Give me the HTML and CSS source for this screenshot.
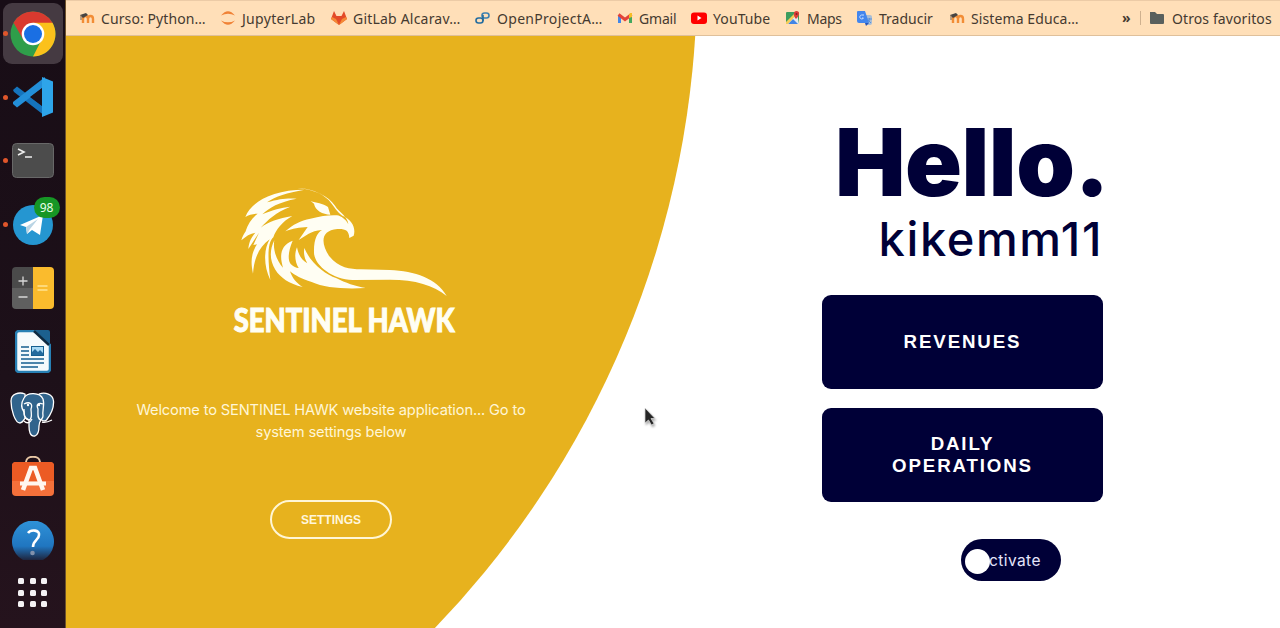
FILE: index.html
```html
<!DOCTYPE html>
<html lang="es">
<head>
<meta charset="utf-8">
<title>Sentinel Hawk</title>
<link rel="stylesheet" href="styles.css">
</head>
<body>
<aside class="dock">
  <div class="app running active"><svg width="46" height="46" viewBox="0 0 46 46"><circle cx="23" cy="23" r="22.500" fill="#2f9e4a"/><path d="M3.500 11.700A22.500 22.500 0 0 1 42.500 11.800L23 23z" fill="#d93a2f"/><path d="M42.500 11.800A22.500 22.500 0 0 1 23 45.500L32 28 23 11.800z" fill="#fbc11c"/><path d="M3.500 11.700L13.500 29 23 23 23 11.800z" fill="#d93a2f"/><circle cx="23" cy="23" r="11.300" fill="#fff"/><circle cx="23" cy="23" r="9" fill="#1a6fe3"/></svg></div>
  <div class="app running"><svg width="42" height="42" viewBox="0 0 42 42"><path d="M1 14l4-3.500L33 32v8L2 16z" fill="#1574bd"/><path d="M1 28l4 3.500L33 10V1L1 26z" fill="#238fd9"/><path d="M30 1l11 4.500v31L30 41z" fill="#2ea5ea"/><path d="M30 12v18L18 21z" fill="#1c1018"/></svg></div>
  <div class="app running"><svg width="42" height="36" viewBox="0 0 42 36"><rect x=".5" y=".5" width="41" height="34" rx="4" fill="#4c4c4c" stroke="#686868"/><path d="M6 6l6 3-6 3M13 14h7" fill="none" stroke="#eee" stroke-width="1.600"/></svg></div>
  <div class="app running"><svg width="40" height="40" viewBox="0 0 40 40"><circle cx="20" cy="20" r="20" fill="#2596d1"/><path d="M7 20L30 10l-3 20-8-5-5 4-1-7z" fill="#fff"/><path d="M13 22l12-8-8 10-3 5z" fill="#b9d4e4"/></svg><span class="count">98</span></div>
  <div class="app"><svg width="42" height="42" viewBox="0 0 42 42"><path d="M4 0h17v21H0V4a4 4 0 0 1 4-4z" fill="#4a4a4a"/><path d="M0 21h21v21H4a4 4 0 0 1-4-4z" fill="#5f5f5f"/><path d="M21 0h17a4 4 0 0 1 4 4v34a4 4 0 0 1-4 4H21z" fill="#fabb2d"/><path d="M6.500 14h9M11 9.500v9M6.500 30h9" stroke="#d8d8d8" stroke-width="1.300"/><path d="M25.500 19h10M25.500 23h10" stroke="#ffe391" stroke-width="1.300"/></svg></div>
  <div class="app"><svg width="36" height="43" viewBox="0 0 36 43"><path d="M4 1h16l15 14v24a3 3 0 0 1-3 3H4a3 3 0 0 1-3-3V4a3 3 0 0 1 3-3z" fill="#f4fafc" stroke="#2780b4" stroke-width="2.500"/><path d="M20 0h13a2 2 0 0 1 2 2v12z" fill="#1c608e"/><path d="M19 1l15 14" stroke="#0d2940" stroke-width="2.500"/><path d="M6 17h8M6 21h8M6 25h8M6 29h23M6 33h23M6 37h17" stroke="#155f8f" stroke-width="1.600"/><rect x="16.500" y="16.500" width="12" height="9" fill="#a7d9f4" stroke="#155f8f"/><path d="M17 25v-3l3-3 3 3 2-2 3 3v2z" fill="#236b9e"/></svg></div>
  <div class="app"><svg width="45" height="46" viewBox="0 0 45 46"><g fill="#31648c" stroke="#fff" stroke-width="1.300" stroke-linejoin="round"><path d="M15 2C9-.5 1 2 1 9c0 9 4 22 9 22 3 0 4-4 6-6z"/><path d="M29 2c6-2 14 0 14.500 7 .5 7-3 14-7 19-2 2-7 0-7-4z"/><path d="M14 6C17 0 30 0 33 7c2 6-1 11 0 17 0 3-4 4-4 10 0 5-1 9-4 10-5 1-6-5-6-10v-6c-4-2-5-3-5-8-3-4-3-9 0-14z"/><path d="M14 12c6-3 9 0 7 5 0 4 2 10-2 11-5-1-5-6-5-11M33 12c-5-2-7 1-5 5 0 5-1 10 3 11" fill="none"/><path d="M14 29c3 3 6 2 8-2M32 30c4 1 8-1 10-2" fill="none"/></g><circle cx="18" cy="13" r="1.200" fill="#fff"/><circle cx="29" cy="13" r="1.200" fill="#fff"/></svg></div>
  <div class="app store"><svg width="42" height="40" viewBox="0 0 42 40"><path d="M14 10V6c0-7 14-7 14 0v4" fill="none" stroke="#e8c7a5" stroke-width="2"/><rect y="6" width="42" height="34" rx="4" fill="#f4703a"/><path d="M0 10a4 4 0 0 1 4-4h34a4 4 0 0 1 4 4v15H0z" fill="#ec5b24"/><path d="M11 34l8-22h4l8 22" fill="none" stroke="#fff6ef" stroke-width="4.500"/><path d="M8 27.500h26" stroke="#fff6ef" stroke-width="4"/></svg></div>
  <div class="app help"><svg width="42" height="40" viewBox="0 0 42 40"><defs><linearGradient id="help" x2="0" y2="1"><stop stop-color="#2f92d8"/><stop offset=".65" stop-color="#2076c0"/><stop offset="1" stop-color="#1e263f"/></linearGradient></defs><path d="M11 39a21 21 0 1 1 20 0z" fill="url(#help)"/><path d="M16 12c3-4 12-3 11 2 0 5-6 5-6 12" fill="none" stroke="#fff" stroke-width="2.600"/><circle cx="20.500" cy="32" r="2.300" fill="#8291ab"/></svg></div>
  <div class="launcher"><i></i><i></i><i></i><i></i><i></i><i></i><i></i><i></i><i></i></div>
</aside>
<div class="browser">
  <nav class="bookmarks">
    <a class="bm moodle"><svg width="16" height="16"><path d="M4 13V9q0-3 2.500-3T9 9v4M9 9q0-3 2.500-3T14 9v4" fill="none" stroke="#f28d35" stroke-width="2.400"/><path d="M1 5l6-2 2 2-5 3z" fill="#454443"/><path d="M2 5v5" stroke="#76604e"/></svg><span>Curso: Python…</span></a>
    <a class="bm jupyter"><svg width="16" height="16"><path d="M1 5.500Q8-3 15 5.500 8 1.800 1 5.500M1 10.500Q8 19 15 10.500 8 14.200 1 10.500" fill="#f08236"/></svg><span>JupyterLab</span></a>
    <a class="bm gitlab"><svg width="16" height="16"><path d="M0 9L3 1l2.500 5h5L13 1l3 8-8 6z" fill="#e34a27"/><path d="M0 9l1-2 4 2 3 6z" fill="#f58a35"/><path d="M16 9l-1-2-4 2-3 6z" fill="#f58a35"/></svg><span>GitLab Alcarav…</span></a>
    <a class="bm project"><svg width="16" height="16"><rect x="1" y="8" width="7" height="5" rx="2.500" fill="none" stroke="#246c9f" stroke-width="1.600"/><rect x="7" y="3" width="7" height="5" rx="2.500" fill="none" stroke="#3e80af" stroke-width="1.600"/><path d="M8 5v6" stroke="#246c9f" stroke-width="1.600"/></svg><span>OpenProjectA…</span></a>
    <a class="bm gmail"><svg width="16" height="16"><path d="M2.500 13V5" stroke="#4387e8" stroke-width="3"/><path d="M13.500 13V5" stroke="#43a85e" stroke-width="3"/><path d="M1.500 4.500L8 9.500l6.500-5" fill="none" stroke="#e3443a" stroke-width="3"/><path d="M13 3h2v4l-3 1V5z" fill="#f6bd26"/></svg><span>Gmail</span></a>
    <a class="bm youtube"><svg width="16" height="16"><rect y="2.500" width="16" height="11.500" rx="3" fill="#f00"/><path d="M6.500 5.500v5l4-2.500z" fill="#fff"/></svg><span>YouTube</span></a>
    <a class="bm maps"><svg width="16" height="16"><rect x="1" y="2" width="13" height="12" rx="1" fill="#3d9d5e"/><path d="M1 14L12 3l2 11z" fill="#e5e9ef"/><path d="M3 14l5-5 5 5z" fill="#4285e5"/><path d="M1 12L11 2h3L3 14H1z" fill="#f5cd59"/><path d="M11 9C8 6 8 1 11.500 1S15 5 11 9z" fill="#dd3d38"/><circle cx="11.500" cy="4" r="1" fill="#831e25"/></svg><span>Maps</span></a>
    <a class="bm translate"><svg width="16" height="16"><path d="M6 5h7q2 0 2 2v6q0 2-2 2H9z" fill="#a9bed6"/><path d="M1 1h7l4 12H2q-2 0-2-2V2q0-1 1-1z" fill="#4386ed"/><path d="M7 5H4.500a2 2 0 1 0 2 3H5" fill="none" stroke="#c8ddff"/><path d="M10 9h5M12.500 8q0 4-2 5M11 10l3 3" fill="none" stroke="#5890dc"/><path d="M8 13h4l-3 3z" fill="#2855b8"/></svg><span>Traducir</span></a>
    <a class="bm moodle"><svg width="16" height="16"><path d="M4 13V9q0-3 2.500-3T9 9v4M9 9q0-3 2.500-3T14 9v4" fill="none" stroke="#f28d35" stroke-width="2.400"/><path d="M1 5l6-2 2 2-5 3z" fill="#454443"/><path d="M2 5v5" stroke="#76604e"/></svg><span>Sistema Educa…</span></a>
    <span class="more">»</span>
    <a class="bm others"><svg width="16" height="16"><path d="M1 2h5l2 2h6q1 0 1 1v8q0 1-1 1H2q-1 0-1-1z" fill="#59605d"/></svg><span>Otros favoritos</span></a>
  </nav>
  <main class="page">
    <svg class="circle" width="1214" height="592" viewBox="66 36 1214 592"><circle cx="-240" cy="-22" r="937" fill="#e7b21e"/></svg>
    <section class="welcome">
      <svg class="logo" width="250" height="165" viewBox="0 0 750 495" fill="#fffef3">
        <path d="M76 111C93 66 157 29 254 29 200 39 167 48 141 67 180 56 202 54 230 56 177 66 147 83 127 103 159 89 182 84 211 80 167 97 144 119 122 143 145 125 175 115 217 108 187 124 167 150 160 172 142 188 143 233 151 300 131 260 130 210 149 178 118 202 103 230 99 281 91 243 94 220 111 193L100 195 117 158 85 207C87 184 94 172 106 158 91 160 77 169 64 181 70 160 82 144 102 128L77 153C84 132 95 115 113 101 99 101 86 105 76 111z"/>
        <path d="M232 24C269 25 303 38 326 60 344 80 348 94 367 107 397 119 408 144 401 167L388 174C387 151 376 146 352 147 301 151 302 190 328 229 357 264 390 268 423 268L509 270C586 274 649 294 680 348 641 316 586 299 510 299L398 300C337 298 283 256 282 218 281 175 293 158 306 150 289 151 276 156 266 161L236 180 263 141C237 143 219 145 196 154 219 133 242 122 271 116 303 108 327 105 351 106 363 108 378 118 385 133 382 106 357 98 345 77 325 48 285 29 232 24z"/>
        <path d="M272 63C288 69 309 70 324 81L331 104C308 103 285 91 282 71z"/>
        <path d="M163 181C158 207 169 241 189 263 179 231 179 196 218 182 204 215 203 241 212 252 221 261 232 265 236 264 224 245 223 221 231 202 236 227 246 241 262 250 251 231 251 216 253 204 271 249 318 285 348 294 378 309 404 318 437 324 372 328 313 323 275 306 244 297 225 286 210 274 217 295 229 309 248 321 207 311 181 293 166 269 149 243 148 211 163 181z"/>
        <text x="41" y="455" font-family="Lato" font-size="96" font-weight="900" stroke="#fffef3" stroke-width="3" textLength="663" lengthAdjust="spacingAndGlyphs">SENTINEL HAWK</text>
      </svg>
      <p class="message">Welcome to SENTINEL HAWK website application... Go to<br>system settings below</p>
      <button class="settings">SETTINGS</button>
    </section>
    <section class="menu">
      <h1>Hello.</h1>
      <h2>kikemm11</h2>
      <button class="action">REVENUES</button>
      <button class="action">DAILY<br>OPERATIONS</button>
      <div class="toggle"><span class="label">Activate</span><span class="knob"></span></div>
    </section>
    <svg class="cursor" width="14" height="22" viewBox="0 0 14 22"><path d="M1 1v15l3.500-3 3 5 2.500-1.500-3-5h4z" fill="#262626" stroke="#ddd" stroke-width=".7"/></svg>
  </main>
</div>
</body>
</html>
```
FILE: styles.css
```css
* { box-sizing: border-box; }
body { margin: 0; width: 1280px; height: 628px; display: flex; overflow: hidden; background: #fff; }
.dock { width: 66px; flex: none; padding-top: 2px; background: linear-gradient(#180d16, #1d1019 60%, #25131d); border-right: 1px solid #6d522c; display: flex; flex-direction: column; align-items: center; }
.app { width: 66px; height: 63.6px; flex: none; display: flex; align-items: center; justify-content: center; position: relative; }
.app svg { display: block; }
.active::after { content: ""; position: absolute; inset: 1px 3px 2px; border-radius: 9px; background: #453a42; z-index: 0; }
.app svg, .count { position: relative; z-index: 1; }
.running::before { content: ""; position: absolute; left: 3px; top: 29px; width: 5px; height: 5px; border-radius: 50%; background: #e0562b; z-index: 2; }
.count { position: absolute; right: 6px; top: 4px; width: 26px; height: 21px; border-radius: 11px; background: #169625; color: #e8ffe8; font: 12px/22px "Noto Sans", sans-serif; text-align: center; }
.store { padding-bottom: 5px; }
.help { padding-bottom: 3px; }
.launcher { display: grid; grid-template-columns: repeat(3, 6px); gap: 5.500px; margin-top: 4px; }
.launcher i { height: 6px; border-radius: 1.500px; background: #f4f2f4; }

.browser { flex: 1; min-width: 0; display: flex; flex-direction: column; }
.bookmarks { height: 36px; flex: none; background: #ffdfb8; border-top: 1px solid #eccba6; border-bottom: 1px solid #dfc09b; display: flex; align-items: center; padding-left: 13px; color: #453a30; font: 14px/20px "Noto Sans", sans-serif; white-space: nowrap; }
.bm { display: flex; align-items: center; gap: 6px; flex: none; width: 141px; }
.bm svg { flex: none; }
.bm span { padding-top: 1px; letter-spacing: .1px; }
.jupyter { width: 111px; }
.jupyter span { letter-spacing: .3px; }
.gitlab { width: 144px; }
.gitlab span { letter-spacing: .2px; }
.project { width: 142px; }
.project span { letter-spacing: .3px; }
.gmail { width: 74px; }
.gmail span { letter-spacing: -.2px; }
.youtube { width: 94px; }
.maps { width: 72px; }
.maps span { letter-spacing: -.3px; }
.translate { width: 92px; }
.translate span { letter-spacing: 0; }
.more { margin-left: 32px; width: 18px; font-weight: 700; }
.others { border-left: 1px solid #cfb18f; padding-left: 8px; height: 14px; width: 140px; gap: 7px; }

.page { flex: 1; display: flex; position: relative; }
.circle { position: absolute; left: 0; top: 0; }
.welcome { width: 530px; display: flex; flex-direction: column; align-items: center; position: relative; padding-top: 144px; }
.logo { display: block; margin-left: 28px; overflow: visible; }
.message { margin: 55px 0 0; color: #fff6d6; font: 14.700px/21.500px Inter, sans-serif; text-align: center; letter-spacing: -.17px; white-space: nowrap; }
.settings { margin-top: 57px; width: 122px; height: 39px; padding: 0; border: 2px solid #fff6d5; border-radius: 20px; background: none; color: #fff6dc; font: 700 12px "Liberation Sans", sans-serif; }
.menu { margin-left: 226px; width: 281px; display: flex; flex-direction: column; position: relative; color: #000037; padding-top: 77px; }
h1 { margin: 0 -6px 0 0; align-self: flex-end; font: 900 94px/98px Inter, sans-serif; letter-spacing: -.5px; }
h2 { margin: 0 0 0 0; align-self: flex-end; font: 500 47px/56px Inter, sans-serif; letter-spacing: 1.600px; }
.action { width: 281px; height: 94px; margin: 28px 0 0; padding: 0; border: 0; border-radius: 9px; background: #000037; color: #fff; font: 700 18.700px/22px "Liberation Sans", sans-serif; letter-spacing: 1.870px; }
.action + .action { margin-top: 19px; }
.toggle { position: relative; margin: 37px 0 0 139px; width: 100px; height: 42px; border-radius: 21px; background: #000037; color: #e5e5fb; font: 15.500px/43px Inter, sans-serif; letter-spacing: .4px; padding-left: 17px; }
.knob { position: absolute; left: 4px; top: 10px; width: 25px; height: 25px; border-radius: 50%; background: #fff; }
.cursor { position: absolute; left: 578px; top: 371px; filter: drop-shadow(1px 2px 1px #0005); }
```
